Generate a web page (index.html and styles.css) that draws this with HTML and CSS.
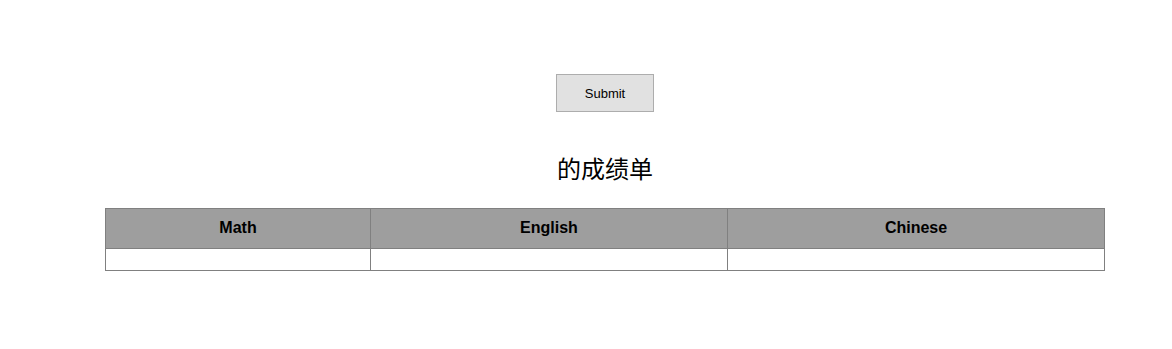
FILE: index.html
```html
<!DOCTYPE html>
<html lang="zh-CN">
<head>
    <meta charset="UTF-8">
    <title>成绩单</title>
    <link rel="stylesheet" href="styles.css">
</head>
<body>
    <div class="container">
        <div class="form">
            <button type="button" class="submit-btn">Submit</button>
        </div>
        <h2 class="title"><span id="student-name"></span>的成绩单</h2>
        <table class="scores">
            <thead>
                <tr>
                    <th class="col-math">Math</th>
                    <th class="col-english">English</th>
                    <th class="col-chinese">Chinese</th>
                </tr>
            </thead>
            <tbody>
                <tr>
                    <td></td>
                    <td></td>
                    <td></td>
                </tr>
            </tbody>
        </table>
    </div>
</body>
</html>
```

FILE: styles.css
```css
body {
    margin: 0;
    font-family: "Liberation Sans", Arial, sans-serif;
}
.container {
    width: 1000px;
    margin-left: 105px;
    padding-top: 74px;
}
.form {
    display: flex;
    justify-content: center;
}
.submit-btn {
    width: 98px;
    height: 38px;
    background-color: #e1e1e1;
    border: 1px solid #adadad;
    font-family: "Liberation Sans", Arial, sans-serif;
    font-size: 13px;
    color: #000;
    padding: 0;
}
.title {
    margin: 38px 0 0;
    height: 58px;
    text-align: center;
    font-family: "Noto Sans CJK SC", sans-serif;
    font-size: 24px;
    font-weight: 400;
    line-height: 36px;
}
.scores {
    width: 1000px;
    border-collapse: collapse;
}
.scores th,
.scores td {
    border: 1px solid #808080;
    padding: 0;
}
.scores th {
    height: 38px;
    padding-bottom: 1px;
    background-color: #9e9e9e;
    font-size: 16px;
    font-weight: 700;
    color: #000;
}
.scores td {
    height: 21px;
}
.col-math {
    width: 264px;
}
.col-english {
    width: 356px;
}
```
